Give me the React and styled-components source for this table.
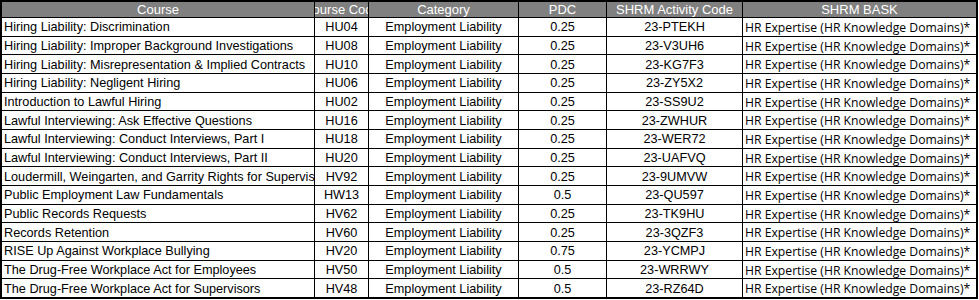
import styled, { createGlobalStyle } from 'styled-components';

const GlobalStyle = createGlobalStyle`
  html, body {
    margin: 0;
    background: #fff;
  }
`;

const Frame = styled.div`
  box-sizing: border-box;
  width: 978px;
  height: 299px;
  border: 2px solid #000;
  background: #000;
`;

const Grid = styled.div`
  display: grid;
  grid-template-columns: 312px 53px 149px 87px 135px 1fr;
  grid-template-rows: 15px repeat(15, 1fr);
  gap: 1px;
  height: 100%;
`;

const HeadCell = styled.div`
  background: #808080;
  color: #fff;
  font-family: "Liberation Sans", Arial, sans-serif;
  font-size: 13px;
  line-height: 15px;
  display: flex;
  justify-content: center;
  overflow: hidden;
  white-space: nowrap;
`;

const Cell = styled.div`
  background: #fff;
  color: #000;
  font-family: ${(p) => (p.$open ? '"Open Sans", sans-serif' : '"Liberation Sans", Arial, sans-serif')};
  font-size: ${(p) => (p.$open ? '12.2px' : '12.7px')};
  display: flex;
  align-items: center;
  justify-content: ${(p) => (p.$left ? 'flex-start' : 'center')};
  padding: 1px ${(p) => (p.$left ? '2px' : '0')} 0;
  overflow: hidden;
  white-space: nowrap;
`;

const headers = ['Course', 'Course Code', 'Category', 'PDC', 'SHRM Activity Code', 'SHRM BASK'];

const rows = [
  ['Hiring Liability: Discrimination', 'HU04', '0.25', '23-PTEKH'],
  ['Hiring Liability: Improper Background Investigations', 'HU08', '0.25', '23-V3UH6'],
  ['Hiring Liability: Misrepresentation & Implied Contracts', 'HU10', '0.25', '23-KG7F3'],
  ['Hiring Liability: Negligent Hiring', 'HU06', '0.25', '23-ZY5X2'],
  ['Introduction to Lawful Hiring', 'HU02', '0.25', '23-SS9U2'],
  ['Lawful Interviewing: Ask Effective Questions', 'HU16', '0.25', '23-ZWHUR'],
  ['Lawful Interviewing: Conduct Interviews, Part I', 'HU18', '0.25', '23-WER72'],
  ['Lawful Interviewing: Conduct Interviews, Part II', 'HU20', '0.25', '23-UAFVQ'],
  ['Loudermill, Weingarten, and Garrity Rights for Supervisors', 'HV92', '0.25', '23-9UMVW'],
  ['Public Employment Law Fundamentals', 'HW13', '0.5', '23-QU597'],
  ['Public Records Requests', 'HV62', '0.25', '23-TK9HU'],
  ['Records Retention', 'HV60', '0.25', '23-3QZF3'],
  ['RISE Up Against Workplace Bullying', 'HV20', '0.75', '23-YCMPJ'],
  ['The Drug-Free Workplace Act for Employees', 'HV50', '0.5', '23-WRRWY'],
  ['The Drug-Free Workplace Act for Supervisors', 'HV48', '0.5', '23-RZ64D'],
];

const App = () => (
  <>
    <GlobalStyle />
    <Frame>
      <Grid>
        {headers.map((h) => (
          <HeadCell key={h}>{h}</HeadCell>
        ))}
        {rows.map(([course, code, pdc, activity]) => [
          <Cell key={course + 'c'} $left>{course}</Cell>,
          <Cell key={course + 'k'}>{code}</Cell>,
          <Cell key={course + 'g'}>Employment Liability</Cell>,
          <Cell key={course + 'p'}>{pdc}</Cell>,
          <Cell key={course + 'a'}>{activity}</Cell>,
          <Cell key={course + 'b'} $left $open>HR Expertise (HR Knowledge Domains)*</Cell>,
        ])}
      </Grid>
    </Frame>
  </>
);

export default App;
